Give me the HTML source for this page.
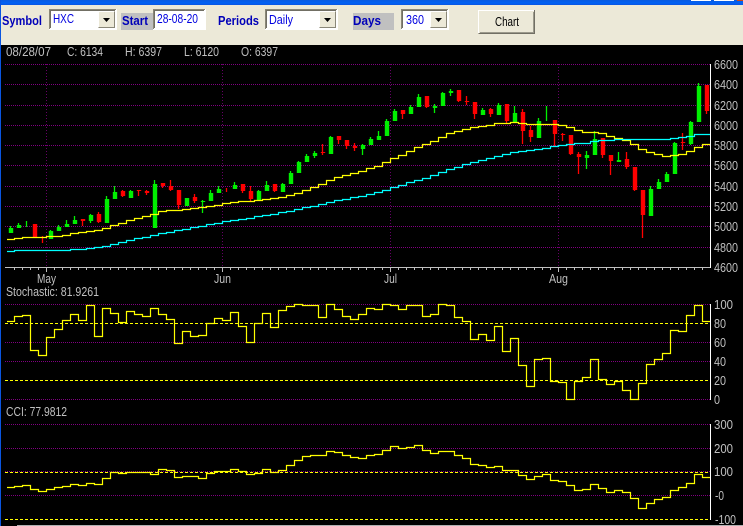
<!DOCTYPE html>
<html><head><meta charset="utf-8"><title>Chart</title>
<style>
html,body{margin:0;padding:0;background:#000;overflow:hidden}
svg{display:block}
text{font-family:"Liberation Sans",sans-serif;font-size:13px}
.g text{fill:#c0c0c0}
.l text{font-weight:bold;fill:#0000b8}
.i text{fill:#0000e0}
</style></head><body>
<svg xmlns="http://www.w3.org/2000/svg" width="743" height="526" viewBox="0 0 743 526">
<defs><linearGradient id="tb" x1="0" y1="0" x2="0" y2="1"><stop offset="0" stop-color="#0a5be0"/><stop offset=".6" stop-color="#0062f5"/><stop offset="1" stop-color="#0a55e0"/></linearGradient></defs>
<rect width="743" height="526" fill="#000"/>
<g shape-rendering="crispEdges">
<rect width="743" height="5" fill="url(#tb)"/>
<rect y="5" width="743" height="40" fill="#ece9d8"/>
<rect x="691" y="0" width="20" height="1" fill="#fff"/><rect x="714" y="0" width="20" height="1" fill="#fff"/><rect x="737" y="0" width="6" height="1" fill="#c8481c"/>
<rect y="0" width="1" height="526" fill="#0a55e0"/>
<rect x="17" y="525" width="726" height="1" fill="#b0b0b0"/>

<!-- symbol combo -->
<rect x="49" y="9" width="68" height="21" fill="#fff"/>
<path d="M49.5 29V9.5H116" fill="none" stroke="#8a8778"/><path d="M50.5 28V10.5H115" fill="none" stroke="#716f64"/>
<rect x="98" y="11" width="17" height="17" fill="#ece9d8"/><path d="M98.5 27.5V11.5H114.5" fill="none" stroke="#fff"/><path d="M98.5 27.5H114.5V11.5" fill="none" stroke="#8a8778"/>
<!-- start -->
<rect x="121" y="13" width="32" height="17" fill="#c0c0c0"/>
<rect x="153" y="9" width="53" height="21" fill="#fff"/>
<path d="M153.5 29V9.5H205" fill="none" stroke="#8a8778"/><path d="M154.5 28V10.5H204" fill="none" stroke="#716f64"/>
<!-- periods combo -->
<rect x="265" y="9" width="73" height="21" fill="#fff"/>
<path d="M265.5 29V9.5H337" fill="none" stroke="#8a8778"/><path d="M266.5 28V10.5H336" fill="none" stroke="#716f64"/>
<rect x="319" y="11" width="17" height="17" fill="#ece9d8"/><path d="M319.5 27.5V11.5H335.5" fill="none" stroke="#fff"/><path d="M319.5 27.5H335.5V11.5" fill="none" stroke="#8a8778"/>
<!-- days -->
<rect x="353" y="13" width="41" height="17" fill="#c0c0c0"/>
<rect x="401" y="9" width="48" height="21" fill="#fff"/>
<path d="M401.5 29V9.5H448" fill="none" stroke="#8a8778"/><path d="M402.5 28V10.5H447" fill="none" stroke="#716f64"/>
<rect x="430" y="11" width="17" height="17" fill="#ece9d8"/><path d="M430.5 27.5V11.5H446.5" fill="none" stroke="#fff"/><path d="M430.5 27.5H446.5V11.5" fill="none" stroke="#8a8778"/>
<!-- button -->
<rect x="478" y="10" width="57" height="24" fill="#ece9d8"/>
<path d="M478.5 33V10.5H534" fill="none" stroke="#fff"/><path d="M478.5 33.5H534.5V10" fill="none" stroke="#716f64"/><path d="M480 32.5H533.5V12" fill="none" stroke="#9c9a8c"/>
</g>
<path d="M103 18h7l-3.5 4z" fill="#000"/><path d="M324 18h7l-3.5 4z" fill="#000"/><path d="M435 18h7l-3.5 4z" fill="#000"/>

<g class="l">
<text x="2" y="25" textLength="40" lengthAdjust="spacingAndGlyphs">Symbol</text>
<text x="122" y="25" textLength="26" lengthAdjust="spacingAndGlyphs">Start</text>
<text x="218" y="25" textLength="41" lengthAdjust="spacingAndGlyphs">Periods</text>
<text x="353" y="25" textLength="28" lengthAdjust="spacingAndGlyphs">Days</text>
</g>
<g class="i">
<text x="53" y="23" textLength="21" lengthAdjust="spacingAndGlyphs">HXC</text>
<text x="157" y="23" textLength="41" lengthAdjust="spacingAndGlyphs">28-08-20</text>
<text x="269" y="24" textLength="24" lengthAdjust="spacingAndGlyphs">Daily</text>
<text x="406" y="24" textLength="18" lengthAdjust="spacingAndGlyphs">360</text>
</g>
<text x="495" y="26" fill="#000" textLength="24" lengthAdjust="spacingAndGlyphs">Chart</text>

<g fill="none">
<!-- grid -->
<path stroke="#800080" stroke-dasharray="1 1" d="M5 64.5H710M5 84.5H710M5 105.5H710M5 125.5H710M5 145.5H710M5 165.5H710M5 186.5H710M5 206.5H710M5 226.5H710M5 247.5H710
M5 304.5H710M5 342.5H710M5 361.5H710M5 399.5H710
M5 424.5H710M5 448.5H710M5 471.5H710M5 495.5H710"/>
<path stroke="#660066" stroke-dasharray="1 2" d="M46.5 64V267M222.5 64V267M390.5 64V267M558.5 64V267"/>
<path stroke="#ffff00" stroke-dasharray="3 2" d="M5 323.5H710M5 380.5H710M5 472.5H710M5 519.5H710"/>
<!-- axes -->
<path stroke="#fff" d="M710.5 64V268M710.5 304V400M710.5 424V520"/>
<path stroke="#c0c0c0" d="M5 267.5H710"/>
<path stroke="#c0c0c0" stroke-width="2" stroke-dasharray="1 7" d="M14 269H710"/>
<path stroke="#c0c0c0" d="M46.5 268V272M222.5 268V272M390.5 268V272M558.5 268V272"/>

<!-- candles: wicks -->
<path stroke="#00f000" stroke-width="1.3" d="M10.5 226V233M18.5 223V228M26.5 221V227M50.5 230V239M58.5 225V231M66.5 220V227M74.5 216V224M90.5 214V223M106.5 196V223M114.5 186V199M130.5 190V198M154.5 180V228M186.5 198V206M202.5 200V213M210.5 190V201M218.5 186V193M234.5 182V189M258.5 190V200M266.5 181V191M282.5 183V192M290.5 171V184M298.5 161V173M306.5 154V162M314.5 151V158M330.5 136V154M362.5 144V155M370.5 137V145M378.5 131V140M386.5 119V136M394.5 109V121M410.5 105V114M418.5 94V107M434.5 104V113M442.5 92V106M450.5 89V96M482.5 108V115M498.5 103V115M514.5 106V122M538.5 118V138M546.5 106V121M586.5 151V169M594.5 131V155M618.5 152V162M650.5 186V216M658.5 179V189M666.5 172V182M674.5 142V174M690.5 121V145M698.5 83V122"/>
<path stroke="#ff0000" stroke-width="1.3" d="M42.5 236V243M82.5 219V226M98.5 212V223M122.5 190V197M138.5 190V196M146.5 190V195M162.5 183V188M170.5 180V191M178.5 190V209M194.5 194V203M226.5 188V192M242.5 184V193M250.5 186V201M274.5 184V192M322.5 144V155M338.5 136V144M346.5 140V149M354.5 143V151M402.5 110V119M426.5 96V108M458.5 90V102M466.5 96V105M474.5 102V119M490.5 108V117M506.5 104V123M522.5 109V144M530.5 126V142M554.5 120V146M562.5 133V141M570.5 135V155M578.5 152V174M602.5 138V158M610.5 155V175M626.5 152V169M634.5 167V191M642.5 190V238M682.5 133V150M706.5 85V114"/>
<!-- candles: bodies -->
<path stroke="#00f000" stroke-width="4.4" d="M11 228V233M19 225V228M51 231V239M59 227V231M67 224V227M75 220V224M91 215V221M107 199V223M115 192V199M131 191V198M155 184V228M187 198V206M203 201V202M211 193V201M219 189V193M235 185V189M259 191V200M267 185V191M283 184V192M291 173V184M299 162V173M307 156V162M315 153V156M331 137V154M363 145V149M371 139V145M379 136V140M387 121V136M395 111V121M411 107V114M419 97V107M435 106V108M443 93V106M451 91V93M483 110V115M499 105V115M515 113V122M539 121V138M587 155V158M595 139V155M619 160V162M651 189V216M659 182V189M667 174V182M675 143V174M691 122V144M699 86V122"/>
<path stroke="#ff0000" stroke-width="4.4" d="M35 224V237M83 219V221M99 214V222M123 191V196M139 190V191M147 191V193M163 183V186M171 186V190M179 190V205M195 197V201M243 184V191M251 191V199M275 184V191M323 152V153M339 136V140M347 140V146M355 146V148M403 110V114M427 96V107M459 90V101M467 101V102M475 102V114M491 109V114M507 104V121M523 112V131M531 130V137M555 120V134M563 134V135M571 135V154M579 154V157M603 138V155M611 155V161M627 159V167M635 167V190M643 190V215M683 142V143M707 85V111"/>

<!-- moving averages -->
<path stroke="#ffff00" stroke-width="1.2" d="M7 239.5H14.5V238.5H22.5V237.5H46.5V236.5H62.5V235.5H70.5V233.5H78.5V232.5H86.5V231.5H94.5V230.5H102.5V228.5H110.5V225.5H118.5V223.5H126.5V220.5H134.5V218.5H142.5V216.5H150.5V214.5H158.5V211.5H166.5V210.5H182.5V209.5H190.5V208.5H198.5V207.5H206.5V206.5H214.5V205.5H222.5V203.5H230.5V202.5H238.5V201.5H254.5V200.5H262.5V199.5H270.5V198.5H278.5V197.5H286.5V195.5H294.5V193.5H302.5V190.5H310.5V187.5H318.5V184.5H326.5V180.5H334.5V177.5H342.5V175.5H350.5V173.5H358.5V171.5H366.5V168.5H374.5V166.5H382.5V162.5H390.5V158.5H398.5V155.5H406.5V151.5H414.5V147.5H422.5V144.5H430.5V141.5H438.5V137.5H446.5V133.5H454.5V131.5H462.5V129.5H470.5V127.5H478.5V126.5H486.5V125.5H494.5V123.5H510.5V122.5H518.5V123.5H526.5V124.5H558.5V125.5H566.5V127.5H574.5V130.5H582.5V132.5H598.5V133.5H606.5V136.5H614.5V138.5H622.5V140.5H630.5V144.5H638.5V149.5H646.5V152.5H654.5V154.5H662.5V156.5H670.5V155.5H678.5V154.5H686.5V151.5H694.5V147.5H702.5V144.5H710"/>
<path stroke="#00ffff" stroke-width="1.2" d="M7 251.5H14.5V250.5H70.5V249.5H86.5V248.5H94.5V247.5H102.5V246.5H110.5V244.5H118.5V242.5H126.5V240.5H134.5V238.5H142.5V237.5H150.5V235.5H158.5V233.5H166.5V232.5H174.5V230.5H182.5V229.5H190.5V227.5H198.5V226.5H206.5V224.5H214.5V223.5H222.5V221.5H230.5V220.5H238.5V219.5H246.5V218.5H254.5V216.5H262.5V215.5H270.5V214.5H278.5V212.5H286.5V211.5H294.5V209.5H302.5V207.5H310.5V206.5H318.5V204.5H326.5V202.5H334.5V200.5H342.5V199.5H350.5V197.5H358.5V196.5H366.5V194.5H374.5V192.5H382.5V190.5H390.5V187.5H398.5V185.5H406.5V182.5H414.5V180.5H422.5V178.5H430.5V175.5H438.5V172.5H446.5V169.5H454.5V167.5H462.5V164.5H470.5V162.5H478.5V160.5H486.5V158.5H494.5V156.5H502.5V154.5H510.5V152.5H518.5V151.5H526.5V150.5H534.5V149.5H542.5V148.5H550.5V146.5H558.5V145.5H566.5V144.5H574.5V143.5H590.5V141.5H598.5V140.5H614.5V139.5H670.5V138.5H678.5V137.5H686.5V136.5H694.5V134.5H710"/>
<!-- stochastic -->
<path stroke="#ffff00" stroke-width="1.2" d="M7 321.5H14.5V316.5H22.5V315.5H30.5V350.5H38.5V355.5H46.5V337.5H54.5V329.5H62.5V320.5H70.5V314.5H78.5V320.5H86.5V305.5H94.5V336.5H102.5V308.5H110.5V313.5H118.5V322.5H126.5V311.5H134.5V314.5H142.5V316.5H150.5V308.5H158.5V314.5H166.5V319.5H174.5V343.5H182.5V331.5H190.5V336.5H198.5V335.5H206.5V323.5H214.5V318.5H222.5V320.5H230.5V312.5H238.5V326.5H246.5V342.5H254.5V323.5H262.5V313.5H270.5V327.5H278.5V310.5H286.5V306.5H294.5V304.5H302.5V305.5H318.5V317.5H326.5V304.5H334.5V309.5H342.5V316.5H350.5V319.5H358.5V314.5H366.5V308.5H374.5V309.5H382.5V304.5H390.5V305.5H398.5V309.5H406.5V305.5H422.5V316.5H430.5V314.5H438.5V304.5H446.5V305.5H454.5V317.5H462.5V321.5H470.5V339.5H478.5V334.5H486.5V340.5H494.5V326.5H502.5V351.5H510.5V338.5H518.5V365.5H526.5V386.5H534.5V359.5H542.5V358.5H550.5V381.5H558.5V382.5H566.5V399.5H574.5V381.5H582.5V377.5H590.5V359.5H598.5V379.5H606.5V384.5H614.5V381.5H622.5V390.5H630.5V399.5H638.5V383.5H646.5V364.5H654.5V359.5H662.5V353.5H670.5V330.5H678.5V331.5H686.5V315.5H694.5V305.5H702.5V321.5H710"/>
<!-- cci -->
<path stroke="#ffff00" stroke-width="1.2" d="M7 487.5H14.5V486.5H22.5V485.5H30.5V489.5H38.5V491.5H46.5V489.5H54.5V487.5H62.5V486.5H70.5V484.5H78.5V485.5H86.5V483.5H94.5V484.5H102.5V478.5H110.5V472.5H118.5V473.5H126.5V472.5H150.5V474.5H158.5V469.5H166.5V470.5H174.5V477.5H182.5V476.5H198.5V478.5H206.5V473.5H214.5V471.5H230.5V469.5H238.5V471.5H246.5V474.5H254.5V473.5H262.5V469.5H270.5V472.5H278.5V470.5H286.5V465.5H294.5V460.5H302.5V456.5H310.5V455.5H326.5V451.5H334.5V452.5H342.5V455.5H350.5V457.5H358.5V458.5H366.5V455.5H374.5V454.5H382.5V450.5H390.5V446.5H398.5V448.5H406.5V447.5H414.5V445.5H422.5V450.5H430.5V453.5H438.5V451.5H454.5V455.5H462.5V458.5H470.5V464.5H478.5V465.5H486.5V467.5H494.5V466.5H502.5V470.5H518.5V475.5H526.5V479.5H534.5V476.5H542.5V474.5H550.5V480.5H558.5V481.5H566.5V485.5H574.5V490.5H582.5V489.5H590.5V484.5H598.5V488.5H606.5V492.5H614.5V490.5H622.5V492.5H630.5V498.5H638.5V508.5H646.5V503.5H654.5V499.5H662.5V497.5H670.5V490.5H678.5V487.5H686.5V483.5H694.5V474.5H702.5V477.5H710"/>
</g>

<g class="g">
<text x="6" y="56" textLength="45" lengthAdjust="spacingAndGlyphs">08/28/07</text>
<text x="67" y="56" textLength="36" lengthAdjust="spacingAndGlyphs">C: 6134</text>
<text x="125" y="56" textLength="37" lengthAdjust="spacingAndGlyphs">H: 6397</text>
<text x="184" y="56" textLength="35" lengthAdjust="spacingAndGlyphs">L: 6120</text>
<text x="241" y="56" textLength="37" lengthAdjust="spacingAndGlyphs">O: 6397</text>

<text x="714" y="69" textLength="24" lengthAdjust="spacingAndGlyphs">6600</text>
<text x="714" y="89" textLength="24" lengthAdjust="spacingAndGlyphs">6400</text>
<text x="714" y="110" textLength="24" lengthAdjust="spacingAndGlyphs">6200</text>
<text x="714" y="130" textLength="24" lengthAdjust="spacingAndGlyphs">6000</text>
<text x="714" y="150" textLength="24" lengthAdjust="spacingAndGlyphs">5800</text>
<text x="714" y="170" textLength="24" lengthAdjust="spacingAndGlyphs">5600</text>
<text x="714" y="191" textLength="24" lengthAdjust="spacingAndGlyphs">5400</text>
<text x="714" y="211" textLength="24" lengthAdjust="spacingAndGlyphs">5200</text>
<text x="714" y="231" textLength="24" lengthAdjust="spacingAndGlyphs">5000</text>
<text x="714" y="252" textLength="24" lengthAdjust="spacingAndGlyphs">4800</text>
<text x="714" y="272" textLength="24" lengthAdjust="spacingAndGlyphs">4600</text>

<text x="37" y="283" textLength="19" lengthAdjust="spacingAndGlyphs">May</text>
<text x="214" y="283" textLength="17" lengthAdjust="spacingAndGlyphs">Jun</text>
<text x="384" y="283" textLength="13" lengthAdjust="spacingAndGlyphs">Jul</text>
<text x="549" y="283" textLength="19" lengthAdjust="spacingAndGlyphs">Aug</text>

<text x="6" y="296" textLength="93" lengthAdjust="spacingAndGlyphs">Stochastic: 81.9261</text>
<text x="714" y="309" textLength="19" lengthAdjust="spacingAndGlyphs">100</text>
<text x="714" y="328" textLength="12" lengthAdjust="spacingAndGlyphs">80</text>
<text x="714" y="347" textLength="12" lengthAdjust="spacingAndGlyphs">60</text>
<text x="714" y="366" textLength="12" lengthAdjust="spacingAndGlyphs">40</text>
<text x="714" y="385" textLength="12" lengthAdjust="spacingAndGlyphs">20</text>
<text x="714" y="404" textLength="6" lengthAdjust="spacingAndGlyphs">0</text>

<text x="6" y="416" textLength="61" lengthAdjust="spacingAndGlyphs">CCI: 77.9812</text>
<text x="714" y="429" textLength="19" lengthAdjust="spacingAndGlyphs">300</text>
<text x="714" y="453" textLength="19" lengthAdjust="spacingAndGlyphs">200</text>
<text x="714" y="476" textLength="19" lengthAdjust="spacingAndGlyphs">100</text>
<text x="715" y="500" textLength="9" lengthAdjust="spacingAndGlyphs">-0</text>
<text x="715" y="524" textLength="21" lengthAdjust="spacingAndGlyphs">-100</text>
</g>
</svg>
</body></html>
